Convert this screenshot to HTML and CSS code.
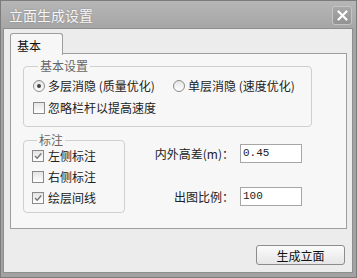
FILE: index.html
```html
<!DOCTYPE html>
<html lang="zh-CN">
<head>
    <meta charset="UTF-8">
    <title>立面生成设置</title>
    <link rel="stylesheet" href="styles.css">
</head>
<body>
    <div class="window">
        <div class="titlebar">
            <span class="title">立面生成设置</span>
            <button class="close-btn" aria-label="关闭">
                <svg width="11" height="11" viewBox="0 0 11 11"><path d="M1.5 1.5 L9.5 9.5 M9.5 1.5 L1.5 9.5" stroke="#fff" stroke-width="2.2" stroke-linecap="round"/></svg>
            </button>
        </div>

        <div class="client">
            <div class="tabs">
                <div class="tab active">基本</div>
            </div>

            <div class="panel">
                <fieldset class="group group-basic">
                    <legend>基本设置</legend>
                    <div class="radio-row">
                        <label class="opt"><span class="radio checked"></span>多层消隐 (质量优化)</label>
                        <label class="opt"><span class="radio"></span>单层消隐 (速度优化)</label>
                    </div>
                    <label class="opt"><span class="check"></span>忽略栏杆以提高速度</label>
                </fieldset>

                <div class="lower">
                    <fieldset class="group group-mark">
                        <legend>标注</legend>
                        <label class="opt"><span class="check checked"><svg width="10" height="10" viewBox="0 0 10 10"><path d="M2 5 L4.2 7.3 L8.2 2.5" fill="none" stroke="#777" stroke-width="1.4"/></svg></span>左侧标注</label>
                        <label class="opt"><span class="check"></span>右侧标注</label>
                        <label class="opt"><span class="check checked"><svg width="10" height="10" viewBox="0 0 10 10"><path d="M2 5 L4.2 7.3 L8.2 2.5" fill="none" stroke="#777" stroke-width="1.4"/></svg></span>绘层间线</label>
                    </fieldset>

                    <div class="fields">
                        <label class="field-label">内外高差(m)：</label>
                        <div class="input">0.45</div>
                        <label class="field-label">出图比例：</label>
                        <div class="input">100</div>
                    </div>
                </div>
            </div>

            <div class="footer">
                <button class="btn">生成立面</button>
            </div>
        </div>
    </div>
</body>
</html>
```

FILE: styles.css
```css
* {
    box-sizing: border-box;
    margin: 0;
    padding: 0;
}

body {
    font-family: "Noto Sans CJK SC", "Noto Sans", sans-serif;
    font-size: 12px;
    color: #222;
    background: #ffffff;
}

.window {
    width: 357px;
    height: 278px;
    display: flex;
    flex-direction: column;
    background: linear-gradient(#b6b6b6, #a4a4a4 30px, #a2a2a2);
    border: 1px solid #7c7c7c;
    padding: 0 3px 4px 2px;
}

/* title bar */
.titlebar {
    height: 27px;
    display: flex;
    align-items: center;
    justify-content: space-between;
    padding: 0 1px 0 6px;
}

.title {
    color: #f6f6f6;
    font-size: 14px;
    line-height: 16px;
    text-shadow: 0 0 2px rgba(0, 0, 0, 0.25);
}

.close-btn {
    width: 20px;
    height: 19px;
    margin-top: 1px;
    border: 1px solid #c4c4c4;
    border-radius: 3px;
    background: linear-gradient(#a8a8a8, #929292);
    display: flex;
    align-items: center;
    justify-content: center;
}

/* client area */
.client {
    flex: 1;
    display: flex;
    flex-direction: column;
    background: #ececec;
    border: 1px solid #8e8e8e;
    padding: 4px 5px 7px 6px;
}

.tabs {
    display: flex;
    height: 21px;
    margin-bottom: -1px;
    position: relative;
}

.tab {
    width: 53px;
    height: 22px;
    padding: 5px 0 0 6px;
    font-size: 12px;
    line-height: 14px;
    color: #111;
    background: #f7f7f7;
    border: 1px solid #9e9e9e;
    border-bottom: none;
    border-radius: 3px 3px 0 0;
}

.panel {
    height: 176px;
    background: #f7f7f7;
    border: 1px solid #9e9e9e;
    padding: 5px 0 0 12px;
}

/* group boxes */
.group {
    border: 1px solid #cfcfcf;
    border-radius: 4px;
}

.group legend {
    margin-left: 5px;
    padding: 0 2px;
    line-height: 14px;
    color: #666;
}

.group-basic {
    width: 289px;
    padding: 6px 0 11px 9px;
}

.radio-row {
    display: grid;
    grid-template-columns: 140px auto;
    margin-bottom: 8px;
}

.opt {
    display: flex;
    align-items: center;
    gap: 3px;
    height: 14px;
    line-height: 14px;
}

.radio {
    width: 12px;
    height: 12px;
    border: 1px solid #8a8a8a;
    border-radius: 50%;
    background: linear-gradient(#e6e6e6, #ffffff);
    display: flex;
    align-items: center;
    justify-content: center;
}

.radio.checked::after {
    content: "";
    width: 4px;
    height: 4px;
    border-radius: 50%;
    background: #444;
}

.check {
    width: 12px;
    height: 12px;
    border: 1px solid #8a8a8a;
    background: linear-gradient(#e4e4e4, #ffffff);
    display: flex;
    align-items: center;
    justify-content: center;
}

.lower {
    display: flex;
    margin-top: 6px;
}

.group-mark {
    width: 102px;
    padding: 2px 0 7px 8px;
    display: flex;
    flex-direction: column;
    gap: 7px;
}

.group-mark .opt {
    gap: 4px;
}

/* right-hand fields */
.fields {
    width: 172px;
    margin: 4px 0 0 5px;
    display: grid;
    grid-template-columns: 1fr 62px;
    column-gap: 6px;
    row-gap: 9px;
    align-items: center;
}

.field-label {
    text-align: right;
    line-height: 19px;
}

.input {
    height: 19px;
    border: 1px solid #a6a6a6;
    background: #ffffff;
    padding-left: 2px;
    font-family: "Liberation Mono", monospace;
    font-size: 11px;
    line-height: 17px;
    color: #222;
}

/* footer */
.footer {
    margin-top: 16px;
    display: flex;
    justify-content: flex-end;
    padding-right: 2px;
}

.btn {
    width: 89px;
    height: 20px;
    font-family: inherit;
    font-size: 12px;
    color: #111;
    border: 1px solid #8c8c8c;
    border-radius: 3px;
    background: linear-gradient(#fbfbfb, #e6e6e6);
}
```
